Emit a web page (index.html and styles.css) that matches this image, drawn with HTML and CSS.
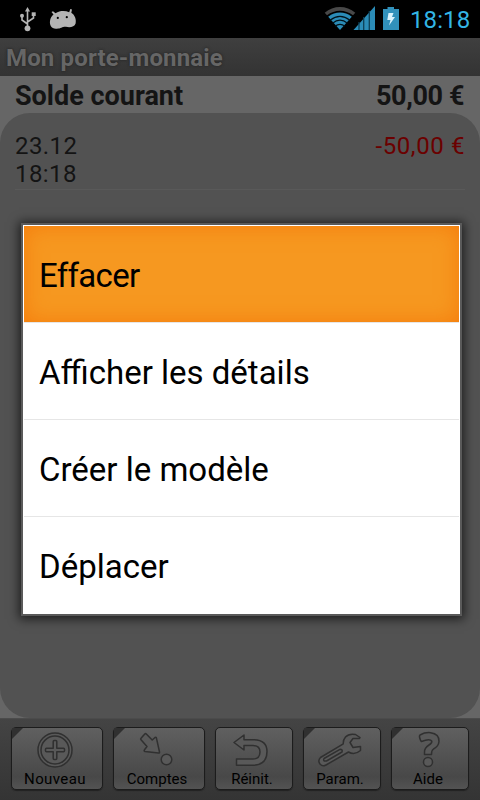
FILE: index.html
```html
<!DOCTYPE html>
<html lang="fr">
<head>
<meta charset="utf-8">
<title>Mon porte-monnaie</title>
<link rel="stylesheet" href="styles.css">
</head>
<body>
<div class="screen">
  <header class="status">
    <svg class="status-left" width="80" height="38" viewBox="0 0 80 38">
      <g fill="none" stroke="#b4b4b4" stroke-width="1.6">
        <path d="M27.5 10V28M27.5 24L22 20V16M27.5 22L33.500 18V14"/>
      </g>
      <g fill="#b4b4b4">
        <path d="M27.500 7L30 11.500H25z"/>
        <circle cx="27.500" cy="28.300" r="2.900"/>
        <circle cx="22" cy="15.700" r="2"/>
        <rect x="31.700" y="12.300" width="4" height="3.700"/>
        <path d="M51.500 12L53 11.200L55.500 13.200C60 10.600 65 10.600 69.200 12.200L70.300 9L72 9.600L71.300 12.800C75 15 76.500 20 75.600 23.500C74.500 27 70 27.800 66 26.800C62 26.500 61 29 56 28.700C51 28.300 49.500 25 50 21C50.300 18 51.700 16 53.500 14.500z"/>
      </g>
      <circle cx="57.800" cy="17.900" r="1.100" fill="#000"/>
      <circle cx="66.800" cy="17.200" r="1.100" fill="#000"/>
    </svg>
    <svg class="status-right" width="76" height="38" viewBox="324 0 76 38">
      <path d="M324.700 12.800C333.500 5.200 346.500 5.200 355.300 12.800L353 15.300C345 9.300 335 9.300 327 15.300z" fill="#484848"/>
      <path d="M340 30L328.200 16.700C335.500 11.200 344.500 11.200 351.800 16.700z" fill="#2b8cb7"/>
      <path d="M330 20.200C336.500 15.200 343.500 15.200 350 20.200M332.500 23.200C337.500 19.200 342.500 19.200 347.500 23.200M335 26.200C338.300 23.700 341.700 23.700 345 26.200" fill="none" stroke="#00121a" stroke-width="1.200"/>
      <path d="M353.500 30L375 6V30z" fill="#2b8cb7"/>
      <path d="M359 22V30M363.700 17V30M369.300 11V30" stroke="#0d4056" stroke-width="1.300"/>
      <path d="M383 9H387.500V7H394V9H399V30H383z" fill="#3191bb"/>
      <path d="M388.500 13H393.500L392 17H395L389 25.500L390.500 20H387.300z" fill="#d9f2fc"/>
    </svg>
    <time class="clock">18:18</time>
  </header>
  <h1 class="title">Mon porte-monnaie</h1>
  <section class="balance"><span>Solde courant</span><span class="bal-value">50,00 €</span></section>
  <main class="list-wrap">
    <div class="list">
      <div class="entry">
        <div class="when">23.12<br>18:18</div>
        <div class="amount">-50,00 €</div>
      </div>
    </div>
  </main>
  <nav class="toolbar">
    <button class="tool wide fold">
      <svg width="40" height="40" viewBox="0 0 40 40"><circle cx="20" cy="20" r="17"/><circle cx="20" cy="20" r="14"/><path d="M18.200 11.500q0-1 1-1h1.600q1 0 1 1v6.700h6.700q1 0 1 1v1.600q0 1-1 1h-6.700v6.700q0 1-1 1h-1.600q-1 0-1-1v-6.700h-6.700q-1 0-1-1v-1.600q0-1 1-1h6.700z"/></svg>
      <span class="spaced">Nouveau</span>
    </button>
    <button class="tool wide fold">
      <svg width="40" height="40" viewBox="0 0 40 40"><path d="M9.300 4L15.200 10L18 7.500Q19.300 6.800 19.500 8.300L22.500 22Q22.700 23.200 21.500 23.100L8 21.500Q6.500 21 7.500 19.800L10 16.500L4 9.800Q3.200 9 4 8.200L7.800 4Q8.500 3.300 9.300 4z"/><circle cx="29.500" cy="29.500" r="5.300"/></svg>
      <span>Comptes</span>
    </button>
    <button class="tool">
      <svg width="40" height="40" viewBox="0 0 40 40"><path d="M2 12.500L12 5V9.700H22Q35 10 35 21.500Q35 34.500 22 35.200H4.500V29H21Q27.800 29 28 22Q28 15.700 21 15.500H12V20z"/></svg>
      <span>Réinit.</span>
    </button>
    <button class="tool fold">
      <svg width="40" height="40" viewBox="0 0 40 40"><path d="M40 7.500L35.500 4.500Q29 3.200 25.500 7Q23 10 23.300 13.800L.5 27.500Q-2.500 30.500 0 34Q2.500 37 6 35L28.500 22Q34.500 25.500 40.500 20.500V16.500L33 17.500L30 12.500L33 8.500H39.500z"/><path d="M4 28.500L20 19.300Q23 19.300 22 22L6.500 31Q2.500 31.500 4 28.500z"/></svg>
      <span>Param.</span>
    </button>
    <button class="tool fold">
      <svg width="40" height="40" viewBox="0 0 40 40"><path d="M12 5Q17 2.200 22.500 2.700Q31.500 4 31 11.500Q30.500 16.500 25.500 19Q23.300 20.500 23.500 24.500H16.500V22.500Q16.200 18 21 15Q24 13.200 23.800 11.200Q22 8 13.500 11.500Q12.500 11 11.500 7Q11.300 5.500 12 5z"/><circle cx="20" cy="32" r="4.500"/></svg>
      <span>Aide</span>
    </button>
  </nav>
  <ul class="menu">
    <li class="active">Effacer</li>
    <li>Afficher les détails</li>
    <li>Créer le modèle</li>
    <li>Déplacer</li>
  </ul>
</div>
</body>
</html>
```
FILE: styles.css
```css
* { box-sizing: border-box; }
body { margin: 0; background: #666; font-family: Roboto, "Liberation Sans", sans-serif; }
.screen { position: relative; width: 480px; height: 800px; overflow: hidden; display: flex; flex-direction: column; }
.status { height: 38px; background: #000; display: flex; }
.status svg { display: block; }
.status-right { margin-left: 244px; }
.clock { margin-left: 10px; width: 64px; font-size: 24px; line-height: 40px; color: #33b5e5; letter-spacing: 0.1px; white-space: nowrap; }
.title { margin: 0; height: 38px; padding-left: 6px; background: linear-gradient(#3f3f3f, #333); color: #666; font-size: 24px; font-weight: 700; letter-spacing: 0.15px; line-height: 40px; text-shadow: 0 0 3px #202020; }
.balance { height: 37px; padding: 0 16px 0 15px; display: flex; justify-content: space-between; font-size: 27px; font-weight: 700; line-height: 40px; color: #141414; }
.bal-value { letter-spacing: -0.4px; }
.list-wrap { height: 605px; background: #666; }
.list { height: 605px; border-radius: 30px; background: #525252; padding: 0 15px; }
.entry { height: 77px; padding-top: 19px; display: flex; justify-content: space-between; border-bottom: 1px solid #595959; font-size: 24px; line-height: 28px; color: #141414; }
.when { letter-spacing: 0.4px; }
.amount { color: #6b0000; letter-spacing: 0.6px; }
.toolbar { height: 82px; padding: 8px 11px 10px; display: flex; gap: 10px; background: linear-gradient(#444, #343434); border-top: 1px solid #4b4b4b; }
.tool { position: relative; width: 78px; height: 63px; margin: 0; padding: 0; border: 1px solid #1c1c1c; border-radius: 5px; background: linear-gradient(#606060, #484848 80%, #535353); display: flex; flex-direction: column; align-items: center; justify-content: flex-start; font: 15px/18px Roboto, sans-serif; color: #000; box-shadow: 0 1px 1px #222; }
.wide { width: 92px; }
.tool svg { display: block; flex: none; overflow: visible; margin: 2px 0 0 -4px; fill: #595959; stroke: #303030; stroke-width: 1.5; stroke-linejoin: round; }
.tool span { margin-left: -4px; white-space: nowrap; }
.tool .spaced { letter-spacing: 0.4px; }
.fold::before { content: ""; position: absolute; left: 0; top: 0; width: 11px; height: 11px; background: #303030; clip-path: polygon(0 0, 100% 0, 0 100%); }
.menu { position: absolute; left: 21px; top: 223px; width: 441px; height: 393px; margin: 0; padding: 1px; list-style: none; background: #fff; border: 2px solid #5a5a5a; box-shadow: 0 1px 10px 2px rgba(0,0,0,.65); }
.menu li { height: 97px; padding-left: 15px; border-bottom: 1px solid #e6e6e6; font-size: 33px; line-height: 99px; color: #000; white-space: nowrap; }
.menu li:last-child { border-bottom: 0; }
.menu .active { background: #f69820; box-shadow: inset 0 0 22px #f57c0c; letter-spacing: -0.7px; }
```
